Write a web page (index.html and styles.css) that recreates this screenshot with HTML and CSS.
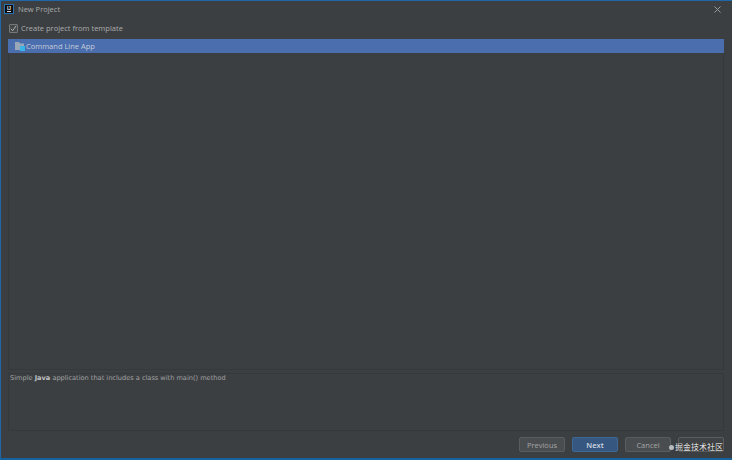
FILE: index.html
```html
<!DOCTYPE html>
<html lang="en">
<head>
<meta charset="utf-8">
<title>New Project</title>
<link rel="stylesheet" href="styles.css">
</head>
<body>
<div class="window">
  <header class="titlebar">
    <span class="app-icon"><span class="app-icon-text">IJ</span><span class="app-icon-bar"></span></span>
    <span class="title">New Project</span>
    <svg class="close" width="7" height="7" viewBox="0 0 7 7"><path d="M.5.500l6 6M6.500.500l-6 6" stroke="#9a9c9e" stroke-width="1" fill="none"/></svg>
  </header>
  <label class="check-row">
    <span class="checkbox"><svg width="7" height="7" viewBox="0 0 7 7"><path d="M.8 3.800l1.800 1.900L6.200.8" stroke="#b0b2b4" stroke-width="1" fill="none"/></svg></span>
    <span>Create project from template</span>
  </label>
  <div class="list">
    <div class="list-row">
      <svg class="folder" width="10" height="9" viewBox="0 0 10 9"><path d="M0 0h4l1 1.500h4V8H0z" fill="#9aa7b8"/><rect x="5" y="4" width="5" height="5" fill="#3cb4e6"/></svg>
      <span>Command Line App</span>
    </div>
  </div>
  <div class="desc">Simple <b>Java</b> application that includes a class with main() method</div>
  <footer class="actions">
    <button class="btn">Previous</button>
    <button class="btn primary">Next</button>
    <button class="btn">Cancel</button>
    <button class="btn help"></button>
  </footer>
  <div class="watermark"><span class="wm-dot"></span>掘金技术社区</div>
</div>
</body>
</html>
```
FILE: styles.css
```css
* { box-sizing: border-box; }
html, body { margin: 0; padding: 0; }
body { width: 732px; height: 460px; overflow: hidden; background: #3c3f41; font-family: "Open Sans", "Noto Sans", sans-serif; color: #a4a6a8; }
.window { position: relative; width: 732px; height: 460px; display: flex; flex-direction: column; background: #3c3f41; border-top: 1px solid #1c68a8; border-left: 1px solid #1c68a8; border-bottom: 2px solid #14639f; padding: 0 8px 0 7px; }
.titlebar { height: 17px; margin: 0 0 0 -4px; padding: 0 3px 1px 0; display: flex; align-items: center; gap: 4px; font-size: 7.5px; color: #a8aaac; }
.app-icon { width: 10px; height: 10px; background: #0b0b0d; border: 1px solid #2a6fb0; display: flex; flex-direction: column; align-items: center; color: #e6e6e6; font: 700 5px/6px "Liberation Sans", sans-serif; }
.app-icon-text { height: 6px; }
.app-icon-bar { width: 4px; height: 1px; background: #ddd; }
.title { flex: 1; }
.check-row { height: 20px; margin-left: 1px; display: flex; align-items: center; gap: 3px; font-size: 7.5px; color: #aaacae; }
.checkbox { width: 9px; height: 9px; background: #45494a; border: 1px solid #75787a; border-radius: 1px; display: flex; align-items: center; justify-content: center; }
.list { height: 331px; margin-top: 1px; background: #3c3f41; border: 1px solid #36393b; border-top: 0; }
.list-row { height: 14px; margin: 0 -1px; background: #4b6eaf; display: flex; align-items: center; gap: 1px; padding-left: 7px; font-size: 7.5px; color: #c4ccd8; }
.desc { height: 58px; margin-top: 3px; padding: 0 1px; border: 1px solid #36393b; font: 6.6px/9px "DejaVu Sans", sans-serif; color: #a0a2a4; }
.desc b { color: #c0c2c4; }
.actions { display: flex; justify-content: flex-end; gap: 7px; margin-top: 6px; }
.btn { width: 46px; height: 15px; padding: 0; background: #4a4d4f; border: 1px solid #5a5d5f; border-radius: 2px; font: 7.5px "Open Sans", sans-serif; color: #a4a6a8; }
.primary { background: #365880; border-color: #3e6793; color: #d2dae4; font-weight: 600; }
.help { background: #404345; }
.watermark { position: absolute; right: 9px; bottom: 6px; display: flex; align-items: center; gap: 1px; font: 500 8px/10px "Noto Sans CJK SC", sans-serif; color: #d8d8d8; text-shadow: 0 0 1px #000; }
.wm-dot { width: 5px; height: 5px; border-radius: 50%; background: #bbb; }
```
